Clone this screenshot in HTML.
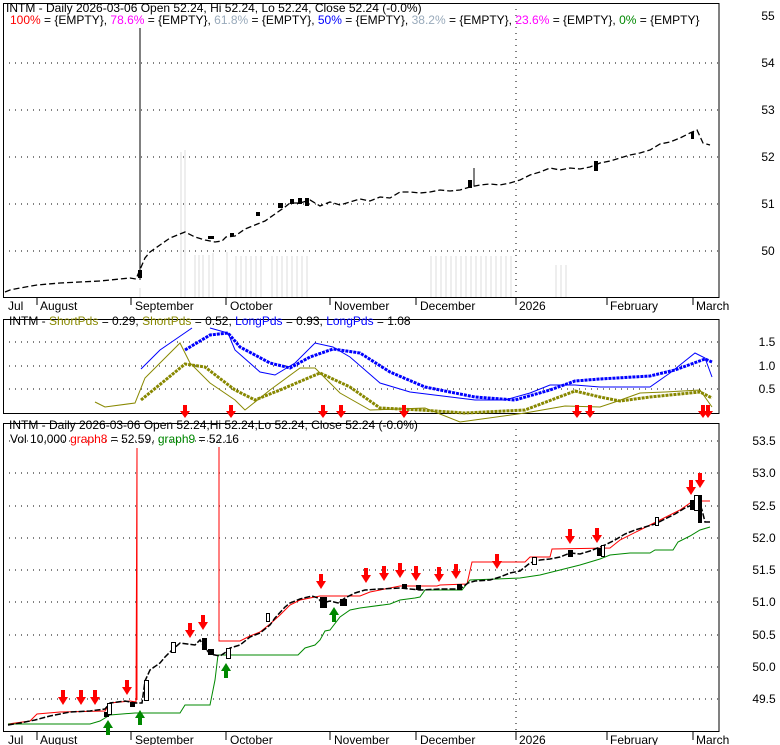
<!DOCTYPE html>
<html><head><meta charset="utf-8"><style>
body{margin:0;background:#fff;width:780px;height:745px;overflow:hidden}
svg{display:block}
text{font-family:"Liberation Sans",Arial,sans-serif;font-size:12px}
</style></head><body>
<svg width="780" height="745" viewBox="0 0 780 745" xmlns="http://www.w3.org/2000/svg">
<!-- panel 1 -->
<g fill="#eee">
<rect x="139" y="288" width="2" height="9"/>
<rect x="180" y="152" width="2" height="145"/><rect x="184" y="150" width="2" height="147"/>
<rect x="194" y="255" width="2" height="42"/><rect x="198" y="255" width="2" height="42"/><rect x="202" y="255" width="2" height="42"/><rect x="208" y="255" width="2" height="42"/><rect x="212" y="253" width="2" height="44"/>
<rect x="226" y="252" width="2" height="45"/><rect x="235" y="256" width="2" height="41"/><rect x="240" y="256" width="2" height="41"/><rect x="245" y="256" width="2" height="41"/><rect x="250" y="256" width="2" height="41"/><rect x="255" y="256" width="2" height="41"/><rect x="260" y="256" width="2" height="41"/>
<rect x="271" y="256" width="2" height="41"/><rect x="276" y="256" width="2" height="41"/><rect x="281" y="256" width="2" height="41"/><rect x="286" y="256" width="2" height="41"/><rect x="291" y="256" width="2" height="41"/><rect x="296" y="256" width="2" height="41"/><rect x="301" y="256" width="2" height="41"/><rect x="306" y="256" width="2" height="41"/>
<rect x="430" y="256" width="2" height="41"/><rect x="435" y="256" width="2" height="41"/><rect x="440" y="256" width="2" height="41"/><rect x="445" y="256" width="2" height="41"/><rect x="450" y="256" width="2" height="41"/><rect x="455" y="256" width="2" height="41"/><rect x="460" y="256" width="2" height="41"/><rect x="465" y="256" width="2" height="41"/><rect x="470" y="256" width="2" height="41"/><rect x="475" y="256" width="2" height="41"/><rect x="480" y="256" width="2" height="41"/><rect x="485" y="256" width="2" height="41"/><rect x="490" y="256" width="2" height="41"/><rect x="495" y="256" width="2" height="41"/><rect x="500" y="256" width="2" height="41"/><rect x="505" y="256" width="2" height="41"/><rect x="510" y="256" width="2" height="41"/>
<rect x="555" y="265" width="2" height="32"/><rect x="560" y="265" width="2" height="32"/><rect x="565" y="265" width="2" height="32"/>
</g>
<g stroke="#000" stroke-dasharray="1,5" stroke-width="1">
<line x1="3" y1="63" x2="719" y2="63"/><line x1="3" y1="110" x2="719" y2="110"/><line x1="3" y1="157" x2="719" y2="157"/><line x1="3" y1="204" x2="719" y2="204"/><line x1="3" y1="251" x2="719" y2="251"/>
<line x1="516" y1="3" x2="516" y2="297"/>
</g>
<rect x="3.5" y="3.5" width="715.5" height="294" fill="none" stroke="#000"/>
<line x1="140" y1="28" x2="140" y2="280" stroke="#000"/>
<rect x="138" y="270" width="4" height="8"/>
<polyline fill="none" stroke="#000" stroke-width="1.3" stroke-dasharray="6,3" points="5,292 10,290 20,288 37,285 60,283 100,281 130,278 136,279 145,258 150,252 160,245 170,238 175,236 185,232 195,237 205,240 215,242 222,241 226,237 235,236 245,229 255,225 265,221 275,214 285,207 290,203 300,203 310,200 320,206 330,202 340,205 350,202 360,199 370,201 380,197 390,198 400,192 410,192 420,193 430,192 440,190 450,191 460,190 470,187 480,185 490,184 500,185 510,183 520,180 530,175 540,172 550,168 560,170 570,168 580,169 590,167 600,163 610,161 620,158 630,155 640,153 650,150 660,144 670,142 680,138 690,133 697,130 703,143 710,145"/>
<g fill="#000"><rect x="278" y="203" width="5" height="5"/><rect x="298" y="198" width="4" height="6"/><rect x="305" y="198" width="4" height="8"/><rect x="468" y="180" width="4" height="8"/><rect x="594" y="161" width="4" height="10"/><rect x="691" y="132" width="3" height="7"/><rect x="256" y="212" width="4" height="4"/><rect x="208" y="236" width="6" height="3"/><rect x="230" y="233" width="4" height="3"/><rect x="290" y="199" width="4" height="5"/></g>
<line x1="474" y1="168" x2="474" y2="186" stroke="#000"/>
<text x="6" y="12"><tspan>INTM - Daily 2026-03-06 Open 52.24, Hi 52.24, Lo 52.24, Close 52.24 (-0.0%)</tspan></text>
<text x="10" y="24"><tspan fill="#f00">100%</tspan> = {EMPTY}, <tspan fill="#f0f">78.6%</tspan> = {EMPTY}, <tspan fill="#9ab">61.8%</tspan> = {EMPTY}, <tspan fill="#00f">50%</tspan> = {EMPTY}, <tspan fill="#9ab">38.2%</tspan> = {EMPTY}, <tspan fill="#f0f">23.6%</tspan> = {EMPTY}, <tspan fill="#080">0%</tspan> = {EMPTY}</text>
<g text-anchor="middle"><text x="768" y="20">55</text><text x="768" y="67">54</text><text x="768" y="114">53</text><text x="768" y="161">52</text><text x="768" y="208">51</text><text x="768" y="255">50</text></g>
<g stroke="#000"><line x1="37" y1="297" x2="37" y2="305"/><line x1="131" y1="297" x2="131" y2="305"/><line x1="226" y1="297" x2="226" y2="305"/><line x1="330" y1="297" x2="330" y2="305"/><line x1="416" y1="297" x2="416" y2="305"/><line x1="516" y1="297" x2="516" y2="305"/><line x1="607" y1="297" x2="607" y2="305"/><line x1="693" y1="297" x2="693" y2="305"/></g>
<text x="8" y="310">Jul</text><text x="40" y="310">August</text><text x="135" y="310">September</text><text x="230" y="310">October</text><text x="334" y="310">November</text><text x="420" y="310">December</text><text x="519" y="310">2026</text><text x="610" y="310">February</text><text x="696" y="310">March</text>
<!-- panel 2 -->
<g stroke="#000" stroke-dasharray="1,5"><line x1="3" y1="342" x2="719" y2="342"/><line x1="3" y1="366" x2="719" y2="366"/><line x1="3" y1="389" x2="719" y2="389"/></g>
<rect x="3.5" y="319.5" width="715.5" height="94" fill="none" stroke="#000"/>
<polyline fill="none" stroke="#00f" stroke-width="1" points="141,369 160,350 192,328"/>
<polyline fill="none" stroke="#00f" stroke-width="1" points="210,328 228,333 235,350 260,372 275,375 295,363 315,343 333,347 350,357 380,383 410,392 475,400 505,400 530,393 550,385 575,385 600,387 650,387 670,373 695,353 705,358 712,377"/>
<polyline fill="none" stroke="#00f" stroke-width="3" stroke-dasharray="3,1" points="185,350 210,335 228,333 240,347 270,363 290,368 310,357 333,349 360,353 390,372 425,387 475,397 515,400 550,390 575,381 600,379 650,376 675,370 705,359 712,362"/>
<polyline fill="none" stroke="#880" stroke-width="1" points="95,402 105,407 135,403 145,378 180,343 190,363 210,383 235,400 245,410 270,390 300,368 315,368 340,393 370,410 425,408 460,422 525,413 565,406 600,407 615,402 640,393 665,392 700,390 712,407"/>
<polyline fill="none" stroke="#880" stroke-width="3" stroke-dasharray="3,1" points="141,400 185,364 205,367 235,390 255,400 280,390 320,373 350,387 380,408 420,410 465,413 525,410 575,391 600,397 620,401 650,397 700,392 712,398"/>
<g fill="#f00">
<path d="M183,405h4v6h3l-5,7l-5,-7h3z"/><path d="M229,405h4v6h3l-5,7l-5,-7h3z"/><path d="M321,405h4v6h3l-5,7l-5,-7h3z"/><path d="M339,405h4v6h3l-5,7l-5,-7h3z"/><path d="M402,405h4v6h3l-5,7l-5,-7h3z"/><path d="M575,405h4v6h3l-5,7l-5,-7h3z"/><path d="M588,405h4v6h3l-5,7l-5,-7h3z"/><path d="M701,405h4v6h3l-5,7l-5,-7h3z"/><path d="M706,405h4v6h3l-5,7l-5,-7h3z"/>
</g>
<text x="9" y="325">INTM - <tspan fill="#880">ShortPds</tspan> = 0.29, <tspan fill="#880">ShortPds</tspan> = 0.52, <tspan fill="#00f">LongPds</tspan> = 0.93, <tspan fill="#00f">LongPds</tspan> = 1.08</text>
<g text-anchor="middle"><text x="767" y="346">1.5</text><text x="767" y="370">1.0</text><text x="767" y="393">0.5</text></g>
<!-- panel 3 -->
<g stroke="#000" stroke-dasharray="1,5">
<line x1="3" y1="441" x2="719" y2="441"/><line x1="3" y1="473" x2="719" y2="473"/><line x1="3" y1="506" x2="719" y2="506"/><line x1="3" y1="538" x2="719" y2="538"/><line x1="3" y1="570" x2="719" y2="570"/><line x1="3" y1="602" x2="719" y2="602"/><line x1="3" y1="635" x2="719" y2="635"/><line x1="3" y1="667" x2="719" y2="667"/><line x1="3" y1="699" x2="719" y2="699"/>
<line x1="516" y1="423" x2="516" y2="732"/>
</g>
<rect x="3.5" y="423.5" width="715.5" height="308" fill="none" stroke="#000"/>
<polyline fill="none" stroke="#f00" stroke-width="1" points="8,724 30,721 37,714 60,712 105,711 110,703 130,701 136,702 137,448 137,700"/>
<polyline fill="none" stroke="#f00" stroke-width="1" points="219,447 219,641 240,641 250,636 260,632 270,624 280,615 290,605 300,600 320,596 360,596 370,592 400,586 437,586 440,585 467,584 472,562 525,562 530,557 550,557 552,549 610,548 620,540 640,530 660,520 680,510 693,501 710,501"/>
<polyline fill="none" stroke="#080" stroke-width="1" points="8,724 90,724 100,721 110,715 135,713 180,713 185,705 210,705 215,680 218,655 298,655 305,648 315,645 320,640 325,631 330,630 340,617 350,610 360,608 390,604 400,600 415,598 420,597 425,590 462,590 470,580 520,578 540,575 560,570 580,565 600,559 610,555 630,553 650,553 655,550 673,550 678,542 690,536 700,530 710,527"/>
<polyline fill="none" stroke="#000" stroke-width="1.5" stroke-dasharray="6,2" points="8,725 20,723 35,720 50,716 70,712 90,711 105,709 110,703 125,701 135,703 142,703 145,681 150,670 160,663 165,657 172,650 180,643 195,645 200,640 205,648 210,654 220,656 226,652 230,648 240,645 250,637 260,633 270,625 275,618 285,607 290,603 300,599 312,596 318,598 322,603 330,601 338,603 345,598 355,593 365,590 380,589 400,588 420,590 440,589 460,589 468,583 475,581 490,580 500,577 510,573 520,571 530,563 540,560 550,559 560,557 570,553 580,554 590,551 600,547 605,545 615,540 625,534 635,530 645,527 655,524 665,519 675,514 685,508 692,505 697,497 702,510 705,522 710,522"/>
<g fill="#000"><rect x="104" y="712" width="5" height="5"/><rect x="130" y="702" width="5" height="5"/><rect x="202" y="638" width="5" height="12"/><rect x="208" y="649" width="6" height="6"/><rect x="320" y="597" width="7" height="11"/><rect x="340" y="599" width="7" height="7"/><rect x="402" y="584" width="5" height="5"/><rect x="416" y="585" width="5" height="5"/><rect x="457" y="584" width="5" height="6"/><rect x="568" y="550" width="5" height="7"/><rect x="597" y="548" width="5" height="8"/><rect x="690" y="500" width="4" height="10"/><rect x="698" y="495" width="4" height="28"/></g>
<g fill="#fff" stroke="#000"><rect x="107.5" y="703.5" width="4" height="11"/><rect x="144.5" y="680.5" width="4" height="20"/><rect x="171.5" y="642.5" width="4" height="10"/><rect x="226.5" y="648.5" width="4" height="10"/><rect x="266.5" y="613.5" width="3" height="8"/><rect x="532.5" y="557.5" width="4" height="7"/><rect x="601.5" y="545.5" width="3" height="11"/><rect x="655.5" y="517.5" width="3" height="8"/><rect x="694.5" y="495.5" width="4" height="15"/></g>
<g fill="#f00">
<path d="M61,690h4v7h3l-5,8l-5,-8h3z"/><path d="M79,690h4v7h3l-5,8l-5,-8h3z"/><path d="M93,690h4v7h3l-5,8l-5,-8h3z"/><path d="M125,680h4v7h3l-5,8l-5,-8h3z"/><path d="M188,623h4v7h3l-5,8l-5,-8h3z"/><path d="M201,615h4v7h3l-5,8l-5,-8h3z"/><path d="M319,574h4v7h3l-5,8l-5,-8h3z"/><path d="M364,568h4v7h3l-5,8l-5,-8h3z"/><path d="M382,566h4v7h3l-5,8l-5,-8h3z"/><path d="M398,563h4v7h3l-5,8l-5,-8h3z"/><path d="M414,566h4v7h3l-5,8l-5,-8h3z"/><path d="M437,567h4v7h3l-5,8l-5,-8h3z"/><path d="M454,564h4v7h3l-5,8l-5,-8h3z"/><path d="M495,554h4v7h3l-5,8l-5,-8h3z"/><path d="M568,529h4v7h3l-5,8l-5,-8h3z"/><path d="M595,528h4v7h3l-5,8l-5,-8h3z"/><path d="M689,480h4v7h3l-5,8l-5,-8h3z"/><path d="M698,473h4v7h3l-5,8l-5,-8h3z"/>
</g>
<g fill="#080">
<path d="M106,735h4v-7h3l-5,-8l-5,8h3z"/><path d="M138,725h4v-7h3l-5,-8l-5,8h3z"/><path d="M224,678h4v-7h3l-5,-8l-5,8h3z"/><path d="M332,622h4v-7h3l-5,-8l-5,8h3z"/>
</g>
<text x="9" y="429">INTM - Daily 2026-03-06 Open 52.24,Hi 52.24,Lo 52.24, Close 52.24 (-0.0%)</text>
<text x="10" y="443">Vol 10,000 <tspan fill="#f00">graph8</tspan> = 52.59, <tspan fill="#080">graph9</tspan> = 52.16</text>
<g text-anchor="middle"><text x="764" y="445">53.5</text><text x="764" y="477">53.0</text><text x="764" y="510">52.5</text><text x="764" y="542">52.0</text><text x="764" y="574">51.5</text><text x="764" y="606">51.0</text><text x="764" y="639">50.5</text><text x="764" y="671">50.0</text><text x="764" y="703">49.5</text></g>
<g stroke="#000"><line x1="37" y1="732" x2="37" y2="740"/><line x1="131" y1="732" x2="131" y2="740"/><line x1="226" y1="732" x2="226" y2="740"/><line x1="330" y1="732" x2="330" y2="740"/><line x1="416" y1="732" x2="416" y2="740"/><line x1="516" y1="732" x2="516" y2="740"/><line x1="607" y1="732" x2="607" y2="740"/><line x1="693" y1="732" x2="693" y2="740"/></g>
<text x="8" y="744">Jul</text><text x="40" y="744">August</text><text x="135" y="744">September</text><text x="230" y="744">October</text><text x="334" y="744">November</text><text x="420" y="744">December</text><text x="519" y="744">2026</text><text x="610" y="744">February</text><text x="696" y="744">March</text>
</svg>
</body></html>
